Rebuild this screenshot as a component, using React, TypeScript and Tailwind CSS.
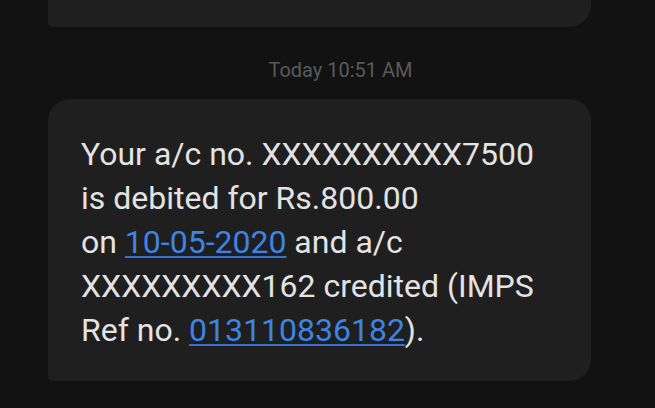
export default function App() {
  return (
    <div className="w-[655px] h-[408px] overflow-hidden bg-[#121212]" style={{ fontFamily: 'Roboto, "Liberation Sans", sans-serif' }}>
      <div className="ml-[48px] w-[543px] h-[27px] bg-[#1f1f1f] rounded-br-[22px] rounded-bl-[5px]" />
      <div className="h-[72px] pt-[13px] flex items-center justify-center pl-[26px] text-[20px] text-[#5a5a5a]">
        Today 10:51 AM
      </div>
      <div className="ml-[48px] w-[543px] h-[282px] bg-[#1f1f1f] rounded-[22px] rounded-bl-[5px] pl-[33px] pt-[33px] text-[32px] leading-[44px] text-[#e3e3e3]">
        <div>Your a/c no. XXXXXXXXXX7500</div>
        <div>is debited for Rs.800.00</div>
        <div>
          on <span className="text-[#3d84e6] underline underline-offset-[3px] decoration-[2px] decoration-[#3572c8]">10-05-2020</span> and a/c
        </div>
        <div>XXXXXXXXX162 credited (IMPS</div>
        <div>
          Ref no. <span className="text-[#3d84e6] underline underline-offset-[3px] decoration-[2px] decoration-[#3572c8]">013110836182</span>).
        </div>
      </div>
    </div>
  );
}
